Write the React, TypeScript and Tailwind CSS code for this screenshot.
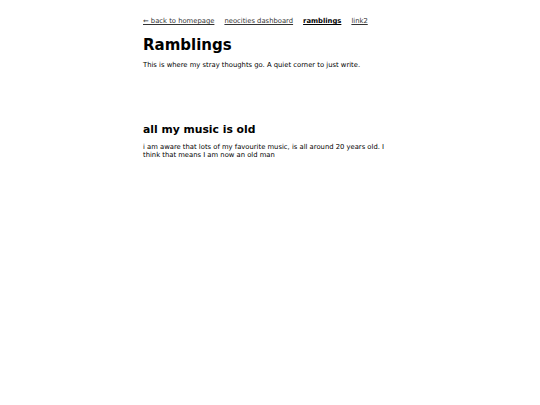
export default function App() {
    return (
        <div className="min-h-[405px] bg-white text-black" style={{ fontFamily: '"DejaVu Sans", Verdana, sans-serif' }}>
            <div className="mx-auto max-w-[254px] pt-[17px]">
                <nav className="flex gap-[10px] text-[6.8px] leading-[8px] text-[#333]">
                    <a href="#" className="underline">← back to homepage</a>
                    <a href="#" className="underline">neocities dashboard</a>
                    <a href="#" className="font-bold text-black underline">ramblings</a>
                    <a href="#" className="underline">link2</a>
                </nav>

                <h1 className="mt-[13px] text-[15px] leading-[15px] font-bold">Ramblings</h1>
                <p className="mt-[8px] text-[6.8px] leading-[8px]">This is where my stray thoughts go. A quiet corner to just write.</p>

                <article className="mt-[55px]">
                    <h2 className="text-[10.8px] leading-[11px] font-bold">all my music is old</h2>
                    <p className="mt-[8px] text-[6.8px] leading-[8px]">
                        i am aware that lots of my favourite music, is all around 20 years old. I think that means I am now an old man
                    </p>
                </article>
            </div>
        </div>
    );
}
